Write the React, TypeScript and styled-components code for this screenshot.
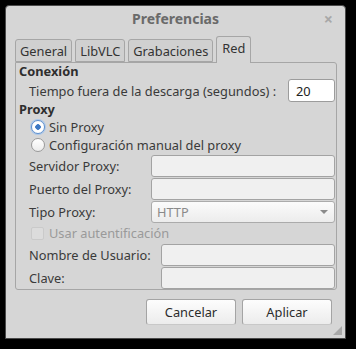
import React from 'react'
import styled, { createGlobalStyle } from 'styled-components'

const GlobalStyle = createGlobalStyle`
  html, body {
    margin: 0;
    padding: 0;
    background: #000;
  }
  body {
    font-family: "Noto Sans", "DejaVu Sans", sans-serif;
    font-size: 12.8px;
    color: #3a3a3a;
  }
`

const Screen = styled.div`
  width: 356px;
  height: 349px;
  padding: 5px 0 0 5px;
  box-sizing: border-box;
`

const Window = styled.div`
  width: 341px;
  height: 334px;
  box-sizing: border-box;
  background: #d6d6d6;
  border: 1px solid #4a4a4a;
  border-radius: 4px 4px 0 0;
  display: flex;
  flex-direction: column;
  position: relative;
`

const TitleBar = styled.div`
  height: 26px;
  box-sizing: border-box;
  display: flex;
  align-items: center;
  justify-content: center;
  position: relative;
  font-weight: bold;
  font-size: 14px;
  color: #6a6a6a;
  padding-bottom: 2px;
`

const CloseButton = styled.span`
  position: absolute;
  right: 12px;
  top: 2px;
  font-size: 16px;
  color: #a8a8a8;
  font-weight: bold;
`

const Body = styled.div`
  padding: 0 9px 0 9px;
  display: flex;
  flex-direction: column;
`

const TabBar = styled.div`
  display: flex;
  align-items: flex-end;
  gap: 3px;
  height: 30px;
  position: relative;
  z-index: 1;
`

const Tab = styled.div<{ $active?: boolean }>`
  height: ${p => (p.$active ? 27 : 23)}px;
  box-sizing: border-box;
  padding: 0 ${p => (p.$active ? 5 : 4)}px;
  border: 1px solid #a6a6a6;
  border-bottom: ${p => (p.$active ? 'none' : '1px solid #a6a6a6')};
  border-radius: 3px 3px 0 0;
  background: ${p => (p.$active ? '#d6d6d6' : '#d0d0d0')};
  display: flex;
  align-items: center;
  color: #333;
  margin-bottom: ${p => (p.$active ? -1 : 0)}px;
  padding-bottom: ${p => (p.$active ? 4 : 0)}px;
`

const Panel = styled.div`
  width: 322px;
  height: 228px;
  box-sizing: border-box;
  border: 1px solid #a6a6a6;
  border-radius: 0 3px 3px 3px;
  padding: 0 1px 0 3px;
  display: flex;
  flex-direction: column;
`

const Heading = styled.div<{ $mt?: number }>`
  font-weight: bold;
  height: 16px;
  line-height: 16px;
  margin-top: ${p => p.$mt ?? 0}px;
  color: #2e2e2e;
`

const Row = styled.div<{ $h: number; $mt?: number; $indent?: number }>`
  display: flex;
  align-items: center;
  height: ${p => p.$h}px;
  margin-top: ${p => p.$mt ?? 0}px;
  padding-left: ${p => p.$indent ?? 10}px;
`

const Label = styled.span<{ $w?: number }>`
  width: ${p => (p.$w ? `${p.$w}px` : 'auto')};
  flex: ${p => (p.$w ? 'none' : '1')};
  white-space: nowrap;
`

const Spin = styled.div`
  width: 47px;
  height: 23px;
  box-sizing: border-box;
  background: #fff;
  border: 1px solid #9c9c9c;
  border-radius: 3px;
  padding-left: 7px;
  display: flex;
  align-items: center;
  color: #222;
`

const Field = styled.div`
  flex: 1;
  height: 100%;
  box-sizing: border-box;
  background: #f0f0f0;
  border: 1px solid #a3a3a3;
  border-radius: 3px;
`

const Combo = styled.div`
  flex: 1;
  height: 100%;
  box-sizing: border-box;
  border: 1px solid #ababab;
  border-radius: 3px;
  background: linear-gradient(#fbfbfb, #ececec);
  display: flex;
  align-items: center;
  justify-content: space-between;
  padding: 0 6px 0 5px;
  color: #8a8a8a;
`

const Arrow = styled.span`
  width: 0;
  height: 0;
  border-left: 4px solid transparent;
  border-right: 4px solid transparent;
  border-top: 4px solid #8a8a8a;
`

const Radio = styled.span<{ $checked?: boolean }>`
  width: 14px;
  height: 14px;
  box-sizing: border-box;
  border-radius: 50%;
  border: 1px solid ${p => (p.$checked ? '#5b8fd0' : '#9a9a9a')};
  background: ${p => (p.$checked ? 'radial-gradient(circle, #3d78c4 0 2.5px, #fff 3px)' : 'linear-gradient(#fff, #ececec)')};
  box-shadow: ${p => (p.$checked ? '0 0 0 1px #a9c6ea' : 'none')};
  margin: 0 4px 0 0;
  flex: none;
`

const Check = styled.span`
  width: 13px;
  height: 13px;
  box-sizing: border-box;
  border: 1px solid #cacaca;
  background: #dcdcdc;
  border-radius: 2px;
  margin: 0 5px 0 0;
  flex: none;
`

const Muted = styled.span`
  color: #9a9a9a;
`

const Footer = styled.div`
  display: flex;
  justify-content: flex-end;
  gap: 6px;
  padding: 9px 4px 0 0;
`

const Button = styled.div`
  width: 90px;
  height: 26px;
  box-sizing: border-box;
  border: 1px solid #a4a4a4;
  border-bottom-color: #c8c8c8;
  border-radius: 3px;
  background: linear-gradient(#fdfdfd, #ececec);
  display: flex;
  align-items: center;
  justify-content: center;
  color: #2b2b2b;
`

const Grip = styled.svg`
  position: absolute;
  right: 3px;
  bottom: 3px;
`

export default function App() {
  return (
    <Screen>
      <GlobalStyle />
      <Window>
        <TitleBar>
          Preferencias
          <CloseButton>×</CloseButton>
        </TitleBar>
        <Body>
          <TabBar>
            <Tab>General</Tab>
            <Tab>LibVLC</Tab>
            <Tab>Grabaciones</Tab>
            <Tab $active>Red</Tab>
          </TabBar>
          <Panel>
            <Heading>Conexión</Heading>
            <Row $h={23} $mt={0}>
              <Label>Tiempo fuera de la descarga (segundos) :</Label>
              <Spin>20</Spin>
            </Row>
            <Heading $mt={-1}>Proxy</Heading>
            <Row $h={18} $mt={1} $indent={12}>
              <Radio $checked />
              Sin Proxy
            </Row>
            <Row $h={18} $indent={12}>
              <Radio />
              Configuración manual del proxy
            </Row>
            <Row $h={22} $mt={1}>
              <Label $w={122}>Servidor Proxy:</Label>
              <Field />
            </Row>
            <Row $h={22} $mt={1}>
              <Label $w={122}>Puerto del Proxy:</Label>
              <Field />
            </Row>
            <Row $h={23} $mt={1}>
              <Label $w={122}>Tipo Proxy:</Label>
              <Combo>
                HTTP
                <Arrow />
              </Combo>
            </Row>
            <Row $h={18} $mt={1} $indent={12}>
              <Check />
              <Muted>Usar autentificación</Muted>
            </Row>
            <Row $h={22} $mt={2}>
              <Label $w={132}>Nombre de Usuario:</Label>
              <Field />
            </Row>
            <Row $h={22} $mt={1}>
              <Label $w={132}>Clave:</Label>
              <Field />
            </Row>
          </Panel>
          <Footer>
            <Button>Cancelar</Button>
            <Button>Aplicar</Button>
          </Footer>
        </Body>
        <Grip width="9" height="9" viewBox="0 0 9 9">
          <path d="M9 0 L9 9 L0 9 Z" fill="#a9a9a9" />
        </Grip>
      </Window>
    </Screen>
  )
}
